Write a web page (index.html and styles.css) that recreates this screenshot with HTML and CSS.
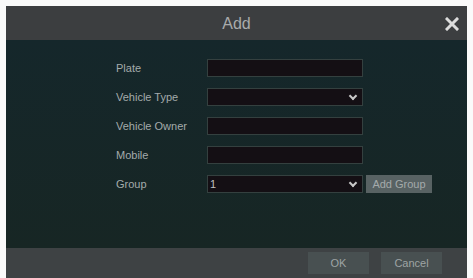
FILE: index.html
```html
<!DOCTYPE html>
<html lang="en">

<head>
    <meta charset="UTF-8">
    <meta name="viewport" content="width=device-width, initial-scale=1.0">
    <title>Add</title>
    <link rel="stylesheet" href="styles.css">
</head>

<body>
    <div class="dialog">
        <div class="dialog-header">
            <span class="dialog-title">Add</span>
            <svg class="close" width="14" height="14" viewBox="0 0 14 14">
                <path d="M2 2 L12 12 M12 2 L2 12" stroke="#dcdcdc" stroke-width="3" stroke-linecap="square" />
            </svg>
        </div>

        <div class="dialog-body">
            <div class="form-row">
                <label class="form-label">Plate</label>
                <div class="field"></div>
            </div>
            <div class="form-row">
                <label class="form-label">Vehicle Type</label>
                <div class="field select"></div>
            </div>
            <div class="form-row">
                <label class="form-label">Vehicle Owner</label>
                <div class="field"></div>
            </div>
            <div class="form-row">
                <label class="form-label">Mobile</label>
                <div class="field"></div>
            </div>
            <div class="form-row">
                <label class="form-label">Group</label>
                <div class="field select">1</div>
                <button class="btn btn-small">Add Group</button>
            </div>
        </div>

        <div class="dialog-footer">
            <button class="btn btn-footer">OK</button>
            <button class="btn btn-footer">Cancel</button>
        </div>
    </div>
</body>

</html>
```

FILE: styles.css
```css
body {
    margin: 0;
    padding: 0;
    background: #fafafa;
    font-family: "Liberation Sans", Arial, sans-serif;
}

.dialog {
    margin: 6px 6px 0 6px;
    width: 461px;
    height: 272px;
    display: flex;
    flex-direction: column;
    background: #16272a;
}

.dialog-header {
    height: 34px;
    background: #3c3e40;
    display: flex;
    align-items: center;
    justify-content: center;
    position: relative;
}

.dialog-title {
    color: #a9abac;
    font-size: 16px;
    margin-top: 2px;
}

.close {
    position: absolute;
    right: 8px;
    top: 11px;
}

.dialog-body {
    flex: 1;
    padding: 19px 0 0 110px;
    display: flex;
    flex-direction: column;
    gap: 11px;
    background: linear-gradient(to bottom, #15272b, #172624);
}

.form-row {
    display: flex;
    align-items: center;
    height: 18px;
}

.form-label {
    width: 91px;
    color: #a4abab;
    font-size: 11px;
}

.field {
    width: 152px;
    height: 16px;
    background: #140f14;
    border: 1px solid #34403f;
    color: #c0c0c0;
    font-size: 11px;
    line-height: 16px;
    padding-left: 2px;
    position: relative;
}

.field.select::after {
    content: "";
    position: absolute;
    right: 6px;
    top: 4px;
    width: 4px;
    height: 4px;
    border-right: 2px solid #c8c8c8;
    border-bottom: 2px solid #c8c8c8;
    transform: rotate(45deg);
}

.btn {
    font-family: "Liberation Sans", Arial, sans-serif;
    border: none;
    padding: 0;
    cursor: pointer;
}

.btn-small {
    margin-left: 3px;
    width: 66px;
    height: 18px;
    background: #586263;
    color: #a4aaab;
    font-size: 11px;
}

.dialog-footer {
    height: 30px;
    background: #3e4244;
    display: flex;
    align-items: center;
    justify-content: flex-end;
    gap: 12px;
    padding-right: 25px;
}

.btn-footer {
    width: 61px;
    height: 22px;
    background: #485051;
    color: #9ea4a4;
    font-size: 11px;
}
```
